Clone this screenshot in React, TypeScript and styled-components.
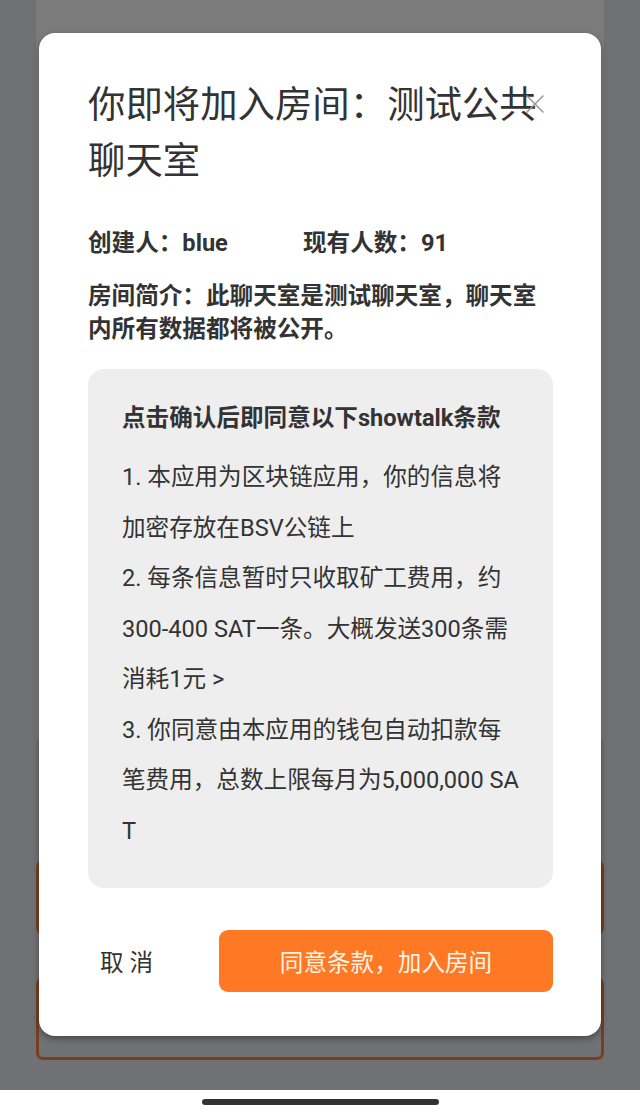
import styled, { createGlobalStyle } from 'styled-components';

const GlobalStyle = createGlobalStyle`
  html, body {
    margin: 0;
    padding: 0;
  }
  body {
    font-family: Roboto, "Noto Sans CJK SC", "Noto Sans", sans-serif;
    color: #333;
  }
`;

const Screen = styled.div`
  position: relative;
  width: 640px;
  height: 1117px;
  display: flex;
  flex-direction: column;
  overflow: hidden;
`;

// dimmed page content behind the dialog
const Backdrop = styled.div`
  flex: 1;
  background: #6f7174;
  display: flex;
  flex-direction: column;
  padding: 0 36px;
`;

const DimPanel = styled.div`
  height: 740px;
  background: #7b7b7b;
`;

const DimCard = styled.div<{ $top: number; $height: number }>`
  margin-top: ${(p) => p.$top}px;
  height: ${(p) => p.$height}px;
  border: 3px solid #7a3f1d;
  border-radius: 7px;
  box-sizing: border-box;
`;

const HomeArea = styled.div`
  height: 27px;
  background: #fff;
  display: flex;
  justify-content: center;
  padding-top: 9px;
  box-sizing: border-box;
`;

const HomeBar = styled.div`
  width: 237px;
  height: 6px;
  border-radius: 3px;
  background: #333;
`;

const Dialog = styled.div`
  position: absolute;
  top: 33px;
  left: 39px;
  width: 562px;
  height: 1003px;
  box-sizing: border-box;
  background: #fff;
  border-radius: 16px;
  box-shadow: 0 3px 6px rgba(0, 0, 0, 0.35);
  padding: 44px 48px 44px 49px;
  display: flex;
  flex-direction: column;
`;

const CloseButton = styled.button`
  position: absolute;
  top: 60px;
  right: 55px;
  width: 22px;
  height: 22px;
  padding: 0;
  border: none;
  background: transparent;
  display: flex;
  align-items: center;
  justify-content: center;
  cursor: pointer;
`;

const Title = styled.h1`
  margin: 0;
  font-size: 37.4px;
  line-height: 56px;
  font-weight: 400;
  color: #333;
  white-space: nowrap;
`;

const InfoRow = styled.div`
  margin-top: 37px;
  display: flex;
  font-size: 23.6px;
  line-height: 34px;
  font-weight: 700;
  color: #333;
`;

const InfoItem = styled.span<{ $width?: number }>`
  width: ${(p) => (p.$width ? `${p.$width}px` : 'auto')};
`;

const Description = styled.p`
  margin: 20px 0 0;
  font-size: 23.6px;
  line-height: 33px;
  font-weight: 700;
  color: #333;
  white-space: nowrap;
`;

const TermsBox = styled.div`
  margin-top: 23px;
  height: 519px;
  box-sizing: border-box;
  background: #eeeeee;
  border-radius: 16px;
  padding: 32px 20px 33px 34px;
`;

const TermsHeading = styled.div`
  font-size: 23.6px;
  line-height: 34px;
  font-weight: 700;
  color: #333;
  white-space: nowrap;
`;

const TermsList = styled.div`
  margin-top: 17px;
  font-size: 23.6px;
  line-height: 50.5px;
  color: #333;
  white-space: nowrap;
`;

const TermLine = styled.div``;

const Actions = styled.div`
  margin-top: 42px;
  display: flex;
  align-items: center;
`;

const CancelButton = styled.button`
  border: none;
  background: transparent;
  padding: 0 0 0 12px;
  font-family: inherit;
  font-size: 23.6px;
  color: #333;
  cursor: pointer;
`;

const ConfirmButton = styled.button`
  margin-left: auto;
  width: 334px;
  height: 62px;
  border: none;
  border-radius: 9px;
  background: #ff7823;
  color: #fff4e6;
  font-family: inherit;
  font-size: 23.6px;
  cursor: pointer;
`;

const terms = [
  '1. 本应用为区块链应用，你的信息将',
  '加密存放在BSV公链上',
  '2. 每条信息暂时只收取矿工费用，约',
  '300-400 SAT一条。大概发送300条需',
  '消耗1元 >',
  '3. 你同意由本应用的钱包自动扣款每',
  '笔费用，总数上限每月为5,000,000 SA',
  'T',
];

export default function App() {
  return (
    <>
      <GlobalStyle />
      <Screen>
        <Backdrop>
          <DimPanel />
          <DimCard $top={120} $height={75} />
          <DimCard $top={42} $height={83} />
        </Backdrop>
        <HomeArea>
          <HomeBar />
        </HomeArea>

        <Dialog>
          <CloseButton aria-label="关闭">
            <svg width="18" height="18" viewBox="0 0 18 18">
              <path d="M1 1L17 17M17 1L1 17" stroke="#9a9a9a" strokeWidth="1.6" strokeLinecap="round" />
            </svg>
          </CloseButton>
          <Title>
            你即将加入房间：测试公共
            <br />
            聊天室
          </Title>
          <InfoRow>
            <InfoItem $width={215}>创建人：blue</InfoItem>
            <InfoItem>现有人数：91</InfoItem>
          </InfoRow>
          <Description>
            房间简介：此聊天室是测试聊天室，聊天室
            <br />
            内所有数据都将被公开。
          </Description>
          <TermsBox>
            <TermsHeading>点击确认后即同意以下showtalk条款</TermsHeading>
            <TermsList>
              {terms.map((line, i) => (
                <TermLine key={i}>{line}</TermLine>
              ))}
            </TermsList>
          </TermsBox>
          <Actions>
            <CancelButton>取 消</CancelButton>
            <ConfirmButton>同意条款，加入房间</ConfirmButton>
          </Actions>
        </Dialog>
      </Screen>
    </>
  );
}
